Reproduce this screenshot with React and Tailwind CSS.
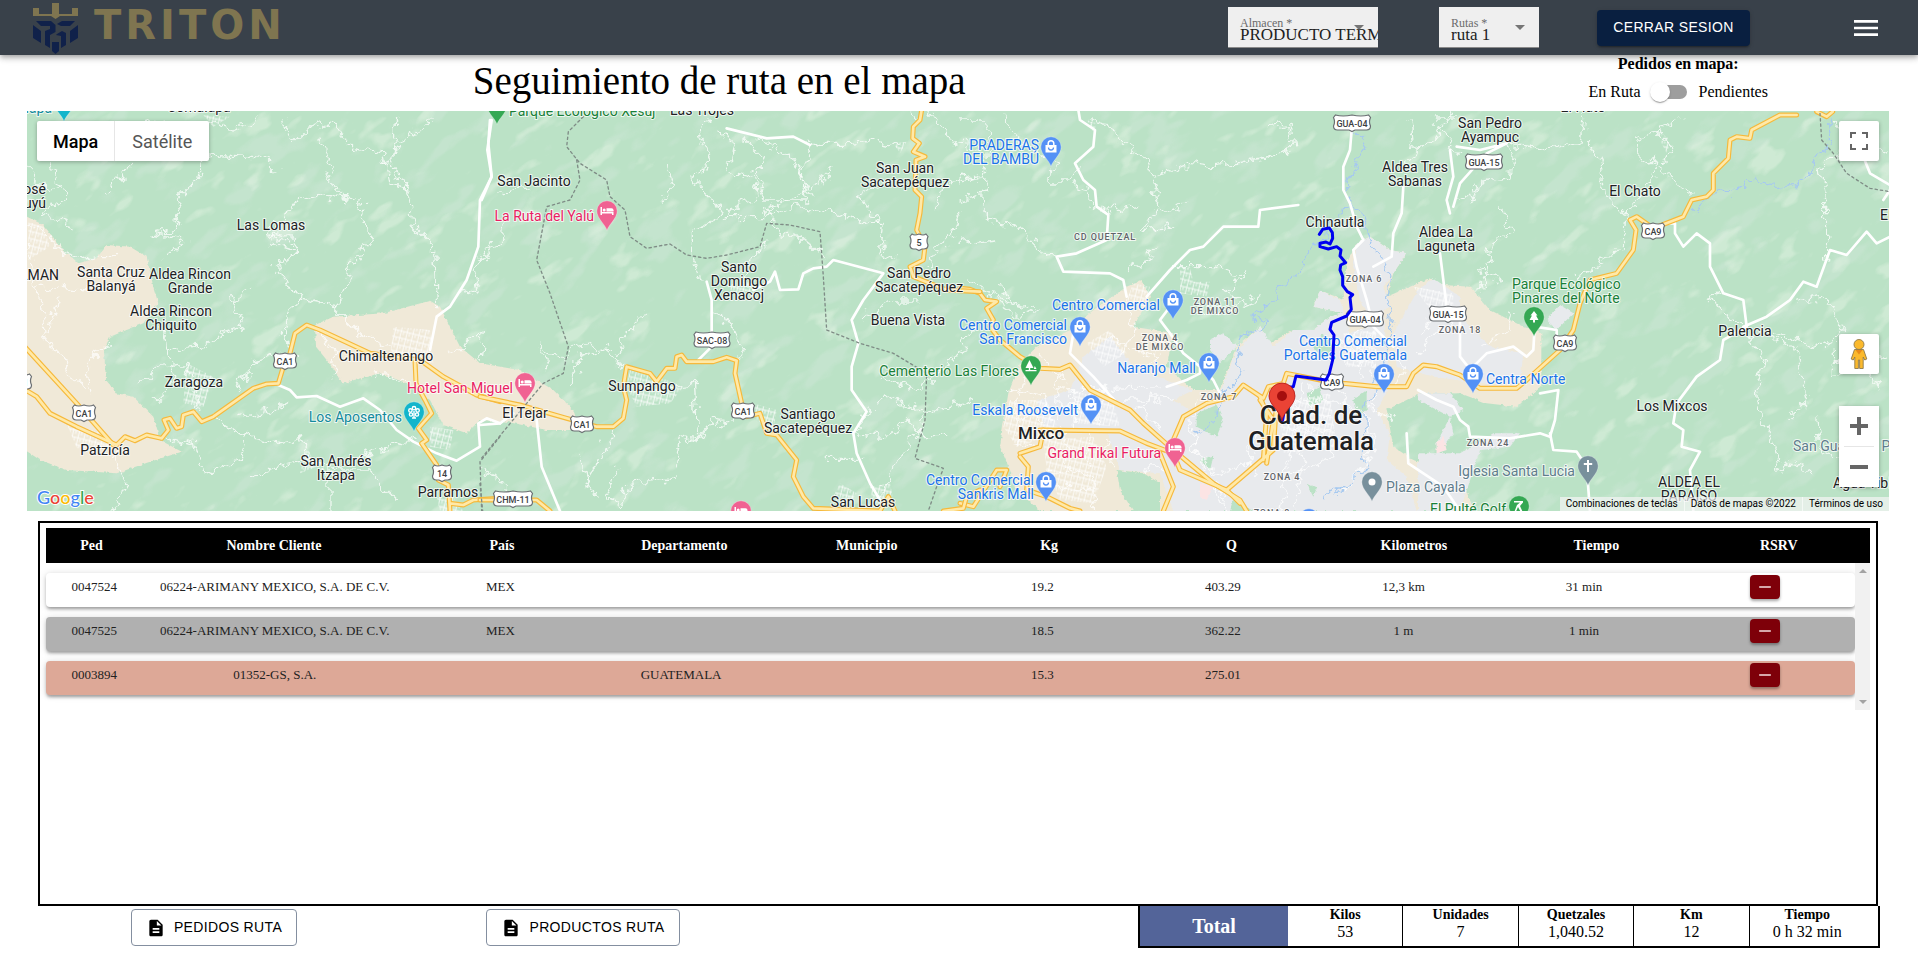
import React from "react";

const SERIF = "font-['Liberation_Serif',serif]";
const SANS = "font-['Liberation_Sans',Arial,sans-serif]";

/* ---------- Map data ---------- */

// Map sheets: every sheet is drawn at three units to the pixel.
const SHEETS = [
  {
    at: "translate(0 100) scale(0.33333)",
    beige: [
      "M60 340 L130 375 L190 450 L235 490 L290 475 L320 435 L390 440 L440 470 L460 560 L475 610 L430 670 L330 710 L312 750 L318 840 L350 880 L400 890 L460 950 L480 1020 L545 1055 L450 1085 L350 1120 L200 1110 L120 1080 L60 1040 Z",
      "M945 675 L1000 650 L1150 640 L1290 602 L1320 620 L1380 740 L1440 790 L1560 810 L1660 870 L1720 930 L1740 990 L1640 990 L1520 965 L1440 960 L1400 1000 L1330 975 L1290 900 L1220 850 L1140 820 L1030 850 L980 780 L948 740 Z",
    ],
    major: [
      "M60 725 L230 910 L340 1035",
      "M60 860 L110 890 L150 940 L230 980 L350 1035",
      "M350 1035 L375 1010 L405 1022 L440 1005 L485 1015 L505 990 L492 960 L510 955 L530 985 L545 980 L550 945 L580 935 L605 965 L640 950 L760 865 L800 852 L835 850 L850 800 L870 760 L885 700 L920 675 L960 690 L1110 760 L1260 780 L1330 830 L1430 885 L1500 905",
      "M1245 780 L1248 850 L1275 900 L1295 940 L1255 985 L1280 1020 L1265 1030 L1310 1095 L1315 1140 L1345 1155 L1350 1233 M1350 1210 L1390 1215 L1420 1200 L1500 1195",
    ],
    mid: [
      "M1470 60 L1465 130 L1475 230 L1440 300 L1435 440 L1400 540 L1350 620 L1310 650 L1290 750",
      "M835 855 L870 870 L890 892 L950 888 L1020 920 L1090 895 L1140 930 L1190 990 L1240 1025 L1310 1060 L1370 1082 L1440 1040 L1435 970 L1460 955 L1500 970",
    ],
    minor: [
      "M60 360 L130 390 L170 440 L240 480 L300 470 L360 470", "M85 430 L100 530 L120 600 L135 710 L200 800 L250 870",
      "M100 560 L250 570 L330 550", "M135 700 L180 600 M270 890 L260 800 L330 730", "M80 200 L140 270 L190 250 M150 190 L200 300 L130 340 L220 375",
      "M390 190 L370 230 L320 280 M500 60 L420 70 L380 130", "M620 90 L600 230 L530 300 L545 350 L500 400 L450 405 L560 420 L490 480",
      "M600 60 L700 90 L780 60 M620 165 L800 175 L830 215 M850 60 L880 130 L920 90 L1000 60",
      "M890 300 L850 350 L800 410 L880 430 L880 470 L830 490 L860 560 L910 590 L860 630 L850 700 L890 770",
      "M890 290 L960 280 L1040 300 L1090 290 L1080 360 L1120 410 L1050 500 L1030 590 L1000 620",
      "M960 120 L1000 200 L980 240 L1030 290 M1000 60 L1050 140 L1150 160 L1170 250 L1220 260 L1240 380 L1300 440 L1310 620",
      "M1190 60 L1180 200 L1220 270 M1300 60 L1200 120 L1160 200", "M900 600 L1000 620 L1080 700 L1170 740",
      "M740 570 L690 600 L730 680 L660 700 L620 740 L500 750 L490 660 M500 740 L530 850 L460 900", "M600 930 L580 850 L560 790 L470 800 L430 850",
      "M640 950 L740 1010 L820 1030 L910 1010 L925 1080 L1020 1110 L1100 1110 L1190 1200",
      "M610 1120 L590 1040 L490 1010 M610 1120 L720 1080 L740 1000", "M920 1080 L800 1110 L760 1130 M1020 1090 L1240 1020",
      "M340 1060 L380 1150 L330 1233 M990 1110 L990 1233", "M720 950 L820 930 L860 900 M840 760 L760 780 L720 860", "M1480 420 L1420 500 L1440 560 L1390 580",
      "M1360 750 L1450 700 L1440 770 M1130 820 L1220 850", "M820 400 L880 410 L870 450 L810 430 Z", "M950 690 L1010 770 L1000 830",
    ],
    dash: ["M1500 1010 L1440 1085 L1445 1233"],
    grids: ["M1180 680 L1290 690 L1300 790 L1170 780 Z", "M560 790 L640 830 L610 920 L550 910 Z", "M200 970 L310 1000 L330 1050 L230 1045 Z", "M1290 980 L1360 990 L1350 1050 L1290 1040 Z", "M920 1040 L950 1100 L900 1120 Z", "M1310 1190 L1350 1180 L1390 1233 L1320 1233 Z", "M85 365 L130 380 L150 440 L85 480 Z", "M610 45 L690 50 L640 80 Z"],
  },
  {
    at: "translate(480 100) scale(0.33333)",
    beige: [],
    major: [
      "M0 890 L120 915 L260 955 L350 980 L400 980 L430 955 L440 900 L430 860 L440 800 L510 820 L530 845 L560 805 L585 805 L590 770 L605 765 L620 785 L700 785 L740 772 L770 782 L765 820 L785 910 L800 950 L840 940 L860 1000 L890 1005 L950 1080 L940 1130 L970 1190 L1000 1225 L1200 1233",
      "M1325 30 L1320 60 L1300 80 L1298 115 L1318 130 L1300 155 L1335 170 L1308 180 L1305 270 L1325 290 L1320 340 L1310 390 L1335 440 L1330 480 L1290 500 L1300 530 L1400 570 L1500 575",
      "M0 1200 L170 1200 L210 1233", "M1200 1233 L1225 1190 L1245 1233 M1390 1233 L1450 1225 L1460 1190 L1500 1170",
    ],
    mid: [
      "M35 60 L22 150 L35 230 L5 300", "M680 545 L695 600 L695 740 L655 780", "M820 570 L870 545 L885 515 L900 570 L955 568 L970 520 L1000 505 L1040 500 L1060 480 L1210 520 L1150 600 L1115 660 L1135 730 L1115 800 L1115 870 L1160 935 L1120 1000 L1130 1060 L1170 1150 L1200 1200",
      "M170 960 L185 1100 L240 1233", "M740 85 L860 115 L940 110 L990 135", "M0 975 L60 970 L100 940",
    ],
    minor: [
      "M690 60 L650 100 L690 170 L680 200 L630 230 L690 290 L720 330 L690 370 L640 390 L640 460 L660 540",
      "M720 90 L760 130 L740 220 L820 230 L840 290 L780 310 L730 360", "M800 120 L850 170 L830 220 L860 300 L980 300 L960 200 L900 150 L840 120",
      "M990 130 L1080 130 L1180 120 L1260 140 M1000 130 L960 240 L1000 290", "M850 340 L920 300 L980 270 L1030 240 L1050 200",
      "M730 350 L850 350 L960 320 L1060 340 L1170 370 L1200 370", "M1200 370 L1170 330 L1130 280 L1200 260", "M1210 370 L1200 460 L1250 480",
      "M860 320 L900 400 L960 410 L1040 480", "M1350 30 L1420 130 L1500 140 M1360 330 L1400 250 L1500 230", "M1440 340 L1420 400 L1370 450 L1340 500",
      "M200 800 L180 740 L250 780 L290 740 L340 730 L400 780 L440 800 M410 770 L440 700 L490 640", "M280 850 L300 770 L380 740",
      "M400 990 L360 1080 L320 1130 L350 1200 M300 1060 L330 1170", "M410 1100 L380 1190 L430 1210 L440 1150 L580 1140",
      "M580 1120 L600 1010 L650 1020 L700 960 L750 970 L760 920 M560 860 L640 850 L650 1010", "M700 640 L760 680 L790 750 L770 780",
      "M1030 1075 L1150 1075 M1110 1000 L1220 1010 L1280 960 L1330 1010 L1400 1010", "M1200 900 L1250 890 L1330 940 L1480 900 M1180 920 L1120 1000",
      "M1210 840 L1310 870 L1420 780 L1490 680", "M0 1110 L50 1130 L90 1190 L170 1200", "M1200 1180 L1240 1110 L1330 960", "M0 480 L60 440 L80 350 M70 280 L150 260",
      "M1310 60 L1290 30 M1150 650 L1250 600 L1320 600", "M860 430 L800 490 L790 570", "M560 200 L580 260 L540 310",
    ],
    dash: [
      "M310 50 L265 95 L260 140 L300 190 L380 240 L390 290 L435 330 L450 410 L500 445 L570 432 L620 465 L680 475 L740 465 L840 440 L860 370 L930 375 L1020 395 L1030 530 L1040 690 L1140 730 L1240 760 L1340 820 L1335 960 L1305 1075 L1390 1105 L1370 1160 L1345 1233",
      "M290 180 L300 240 L270 300 L200 320 L170 480 L210 580 L265 740 L250 820 L190 850 L140 910 L0 1080", "M0 1150 L8 1233",
    ],
    grids: ["M450 810 L560 840 L610 860 L570 910 L470 920 L440 860 Z", "M820 910 L890 930 L880 990 L830 960 Z", "M1080 1150 L1130 1180 L1110 1210 L1060 1190 Z", "M1170 1160 L1230 1150 L1240 1200 L1180 1210 Z", "M740 555 L830 540 L830 570 L760 580 Z", "M1240 130 L1280 125 L1260 160 Z"],
  },
];

const CITY = {
  at: "translate(960 100) scale(0.33333)",
  beige: [
    "M545 540 L500 560 L400 630 L330 690 L230 740 L180 790 L145 880 L130 970 L120 1040 L150 1110 L170 1170 L240 1233 L1544 1233 L1500 1130 L1360 1080 L1300 1040 L1280 930 L1380 880 L1500 880 L1580 910 L1670 920 L1744 860 L1744 700 L1690 680 L1590 630 L1530 560 L1450 555 L1410 535 L1280 590 L1300 520 L1340 460 L1290 450 L1230 410 L1190 430 L1160 490 L1150 600 L1080 570 L1060 620 L1150 640 L1110 650 L1060 690 L1000 690 L930 730 L900 680 L830 740 L780 870 L700 870 L620 800 L640 700 L520 680 L570 590 Z",
  ],
  grey: [
    "M370 770 L450 710 L520 800 L640 850 L700 870 L640 900 L690 930 L780 880 L830 750 L900 680 L940 740 L1000 690 L1060 690 L1110 650 L1150 640 L1060 620 L1080 570 L1140 600 L1170 700 L1220 680 L1280 590 L1270 640 L1290 860 L1250 930 L1290 1000 L1280 1080 L1340 1130 L1370 1233 L640 1233 L600 1120 L480 1110 L440 990 L250 980 L230 900 L330 870 Z",
    "M1190 430 L1230 410 L1290 450 L1340 460 L1300 520 L1270 560 L1290 620 L1230 660 L1200 600 L1180 500 Z",
    "M1374 570 L1420 535 L1500 590 L1500 650 L1590 740 L1690 760 L1680 850 L1560 850 L1420 830 L1310 800 L1300 700 Z",
    "M1374 880 L1470 880 L1510 930 L1470 950 L1374 900 Z", "M1470 950 L1480 1000 L1430 1070 L1430 1030 Z",
    "M1374 1060 L1500 1060 L1600 1000 L1680 1000 L1650 1040 L1560 1050 L1500 1233 L1374 1233 Z",
    "M750 720 L790 700 L830 740 L780 790 L750 750 Z", "M1760 660 L1800 615 L1840 640 L1790 690 Z",
  ],
  green: [
    "M710 940 L770 915 L790 960 L770 1010 L710 980 Z", "M470 1110 L550 1120 L600 1150 L600 1233 L520 1233 L480 1170 Z", "M1040 880 L1080 860 L1090 900 L1050 920 Z",
    "M1180 900 L1220 870 L1220 930 L1190 950 Z", "M1040 1150 L1070 1165 L1060 1190 Z", "M720 1080 L760 1070 L750 1110 Z", "M820 1200 L880 1233 L810 1233 Z", "M1090 700 L1120 740 L1090 780 L1060 740 Z",
  ],
  pink: ["M720 1150 L760 1160 L740 1200 L720 1190 Z", "M1430 1030 L1450 1010 L1460 1050 L1430 1060 Z"],
  major: [
    "M0 565 L30 568 L60 580 L75 600 L110 605 L80 625 L100 660 L90 680 L120 720 L180 770 L240 805 L300 808 L330 795 L350 820 L390 870 L510 930 L550 970 L640 1050 L760 1150 L840 1200 L860 1233",
    "M240 990 L480 993 L560 1030 L640 1060 M600 1060 L640 1160 L610 1233 M640 1060 L660 1110 L800 1170 L840 1210 M640 1020 L670 950 L740 910 L820 890 L850 855 L910 895 L925 860 L970 850 L980 820 L1080 840 L1150 850 L1250 860 L1340 860 L1360 820 L1390 795 L1430 800 L1500 825 L1560 865 L1670 865 L1700 840 L1800 750 L1840 690 L1860 610 L1890 540 L1970 520 L2020 450 L2028 390 L2010 360 L2030 350 L2080 385 L2170 350 L2195 300 L2240 290 L2260 270 L2260 220 L2305 175 L2310 120 L2330 110 L2370 115 L2375 90 L2460 45 L2510 45 M2570 35 L2600 50 L2618 35",
    "M920 1090 L940 960 L900 900 M800 1170 L940 1050 L950 900 M910 1080 L920 940 L900 890 M180 1070 L205 1100 L200 1170 L260 1190 L330 1225 L360 1233 M180 1060 L240 1040 L250 990 M0 1210 L40 1220 L110 1110 L140 1110 L120 1160",
  ],
  mid: [
    "M355 30 L360 60 L405 90 L400 140 L345 190 L370 240 L405 270 L410 320 L445 345 L440 420 L350 460 L290 470 L310 515 L450 520 L490 540 L500 590",
    "M1175 90 L1170 150 L1150 200 L1150 270 L1170 310 L1190 380 L1210 420 L1180 450 L1190 500 L1220 600 L1240 680 L1300 740",
    "M1330 260 L1325 340 L1300 400 L1295 470 L1240 500", "M1470 150 L1480 230 L1460 300 L1470 340", "M560 590 L630 510 L690 450 L730 440 L790 380 L895 380 L900 330 L1015 315",
    "M1440 460 L1450 540 L1460 620 L1500 660 M1480 320 L1500 250 L1580 160 L1640 130 L1560 150 L1490 140",
    "M1500 650 L1500 770 L1540 820 M1540 800 L1580 760 L1660 740 L1700 770 L1720 750 L1724 680 L1790 690 L1790 720",
    "M1374 870 L1430 900 L1480 920 L1500 960 L1525 980 L1530 1010 L1650 1015 L1740 1000 L1770 1010 L1785 960 L1795 870 L1740 880",
    "M1770 1000 L1780 1050 L1850 1055 L1880 1100 L1890 1233", "M2110 370 L2145 370 L2145 400 L2170 440 L2210 400 L2250 430 L2250 500 L2290 580 L2350 600 L2360 680 L2290 720 L2280 780 L2210 830 L2150 910 L2140 970 L2170 990 L2165 1040 L2220 1055 L2190 1110 L2200 1233",
    "M2350 680 L2420 650 L2490 600 L2530 545 L2570 560 L2610 450 L2660 465 L2720 395 L2750 430 L2790 410", "M2710 170 L2730 220 L2790 255 M2790 270 L2770 300",
    "M1340 1000 L1345 1090 L1450 1160 L1500 1233", "M660 580 L600 660 L630 700 L670 760 L720 800 L760 840 L780 880", "M620 860 L680 840 L720 820 L720 790", "M480 920 L400 830 L330 760 L340 700",
  ],
  minor: [
    "M130 40 L170 120 L290 180 L260 240 L330 240 L360 200", "M0 240 L70 230 L90 120 L80 60 L0 60 M70 230 L80 350 L140 380 M140 370 L200 400 L250 460 L290 470",
    "M400 60 L470 100 L520 140 L560 190 L580 230 L690 190 L760 200 L900 180 L1000 150 L990 70 L930 80", "M580 240 L590 300 L620 340 L680 315 M590 320 L550 390 L640 380 M350 250 L410 330",
    "M0 300 L60 290 M0 430 L110 420 M430 330 L530 320 M500 520 L560 480 L590 440", "M1350 60 L1360 150 L1440 100 L1470 40 M1340 200 L1370 180 L1380 130 M1420 60 L1500 60",
    "M640 500 L760 500 L850 520 M860 510 L800 580 L850 600 M700 640 L770 640 L900 590", "M1480 290 L1530 300 L1560 250 L1650 240 L1660 160 L1640 130 M1500 160 L1450 100",
    "M1640 130 L1760 150 L1860 130 L1870 40 M1880 110 L1920 180 L1930 280 L1980 320 L2000 360", "M2160 60 L2030 120 L2040 190 L2090 180 L2080 240 L2000 330 L1990 420 L1940 480 L1850 530",
    "M2080 190 L2130 220 L2160 260 L2190 270 M2090 90 L2130 130 L2110 180", "M1550 500 L1620 540 M1560 570 L1600 430 L1660 400 L1620 320", "M2290 580 L2250 590 L2290 640 L2350 680",
    "M2350 700 L2420 780 L2390 850 L2400 960 L2430 1000 L2460 1110 M2420 700 L2500 740 L2540 900 L2480 960 M2450 700 L2580 740 L2650 700 L2600 590 L2520 600",
    "M2600 480 L2600 310 L2580 200 L2620 170 L2790 140 M2700 170 L2620 60", "M2740 770 L2790 780 M2620 740 L2620 820 L2720 810 L2760 870 M2560 1130 L2500 1090 L2460 1110 M2570 950 L2580 1050 L2640 1080",
    "M310 870 L600 860 M280 930 L420 900 L600 900 M240 760 L300 830 L290 960 M340 880 L340 980 M400 880 L410 960 M450 720 L560 760 L600 770 L560 800 M500 600 L520 700 L480 760",
    "M700 960 L720 900 M640 900 L580 890 L540 930 L600 990 M690 960 L700 1040 L770 1120 L870 1090 L880 1010 L910 1000 M880 1120 L860 1020",
    "M1020 850 L1010 1000 L1030 1090 L1010 1233 M1050 850 L1040 1010 M970 940 L1110 950 M960 980 L1120 990 M960 1020 L1130 1040 M1000 900 L1200 910 M1110 850 L1150 900 L1220 940 L1240 1040 L1200 1110 L1160 1160 M990 1060 L960 1233 M940 1130 L1040 1110 L1120 1060",
    "M1150 790 L1190 730 L1250 700 M1190 740 L1210 840 M1250 720 L1240 830 M1300 740 L1330 800 L1300 850 M1140 730 L1200 690 M1240 870 L1240 940 L1300 960",
    "M1374 760 L1420 700 L1500 650 M1380 700 L1420 640 M1660 640 L1640 700 L1560 740", "M150 870 L250 890 L280 960 M160 940 L240 960 M150 1030 L230 1040 M200 800 L170 900 L180 1040",
    "M300 990 L330 1100 L400 1130 L410 1233 M260 1120 L330 1110 M260 1160 L400 1170 M380 1000 L380 1110 M440 1020 L460 1100 M700 1040 L740 1110 L800 1233 M560 1100 L610 1110",
    "M20 540 L130 600 L210 620 L240 630 M110 600 L160 640 L230 635 M130 560 L160 620",
  ],
  water: [
    "M1180 90 L1215 130 L1195 190 L1160 240 L1170 300 L1210 340 L1230 440 L1270 480 L1290 520 L1280 600 L1300 660 L1280 720 L1280 790 L1240 860 L1220 940 L1210 1040 L1220 1110 L1150 1160 L1090 1190",
    "M1160 310 L1100 400 L1050 450 L1030 500 L960 560 L950 600 L880 650 L920 670 L850 710 L830 780 L840 830 L780 890 L760 970 L700 990",
    "M2200 330 L2250 290 L2350 260 L2380 240 L2480 265 L2550 230 L2570 160 L2620 130 L2610 50",
  ],
  dash: ["M2580 40 L2585 120 L2620 160 L2660 220 L2730 265 L2790 275"],
  grids: ["M520 550 L570 560 L550 620 L500 600 Z", "M660 510 L690 500 L700 545 L750 545 L740 590 L660 580 Z", "M150 900 L260 900 L300 1000 L170 1040 L130 980 Z", "M250 1020 L400 1010 L440 1100 L400 1210 L300 1200 L260 1110 Z", "M960 910 L1110 880 L1130 1040 L970 1060 Z", "M1360 560 L1480 580 L1480 640 L1420 640 Z", "M380 730 L450 690 L500 760 L430 800 Z", "M340 870 L460 910 L480 980 L340 970 Z", "M1150 700 L1250 690 L1240 800 L1160 800 Z", "M380 60 L410 70 L400 100 Z", "M400 310 L440 320 L430 345 Z", "M2100 120 L2130 130 L2120 160 Z"],
};

const INK = "#202124";
const BLUE = "#1a73e8";
const PINK = "#e91e63";
const GREEN = "#188038";
const TEAL = "#128a9c";
const SLATE = "#5f7d8c";

// Place names: lines, x, first baseline, anchor, colour.
const PLACES = [
  [["Jalapa"], 52, 113, "end", TEAL],
  [["Comalapa"], 199, 112, "middle", INK],
  [["San José", "Muyú"], 46, 194, "end", INK],
  [["ALMAN"], 59, 280, "end", INK],
  [["Las Lomas"], 271, 230, "middle", INK],
  [["Santa Cruz", "Balanyá"], 111, 277, "middle", INK],
  [["Aldea Rincon", "Grande"], 190, 279, "middle", INK],
  [["Aldea Rincon", "Chiquito"], 171, 316, "middle", INK],
  [["Chimaltenango"], 386, 361, "middle", INK],
  [["Zaragoza"], 194, 387, "middle", INK],
  [["Patzicía"], 105, 455, "middle", INK],
  [["San Andrés", "Itzapa"], 336, 466, "middle", INK],
  [["Parramos"], 448, 497, "middle", INK],
  [["Hotel San Miguel"], 513, 393, "end", PINK],
  [["Los Aposentos"], 402, 422, "end", TEAL],
  [["San Jacinto"], 534, 186, "middle", INK],
  [["La Ruta del Yalú"], 594, 221, "end", PINK],
  [["Parque Ecológico Xesuj"], 509, 116, "start", GREEN],
  [["Las Trojes"], 702, 115, "middle", INK],
  [["San Juan", "Sacatepéquez"], 905, 173, "middle", INK],
  [["Santo", "Domingo", "Xenacoj"], 739, 272, "middle", INK],
  [["San Pedro", "Sacatepéquez"], 919, 278, "middle", INK],
  [["Buena Vista"], 908, 325, "middle", INK],
  [["Sumpango"], 642, 391, "middle", INK],
  [["El Tejar"], 525, 418, "middle", INK],
  [["Santiago", "Sacatepéquez"], 808, 419, "middle", INK],
  [["San Lucas"], 863, 507, "middle", INK],
  [["Cementerio Las Flores"], 1019, 376, "end", GREEN],
  [["Centro Comercial", "Sankris Mall"], 1034, 485, "end", BLUE],
  [["Eskala Roosevelt"], 1078, 415, "end", BLUE],
  [["PRADERAS", "DEL BAMBÚ"], 1039, 150, "end", BLUE],
  [["Centro Comercial"], 1160, 310, "end", BLUE],
  [["Centro Comercial", "San Francisco"], 1067, 330, "end", BLUE],
  [["Naranjo Mall"], 1196, 373, "end", BLUE],
  [["Grand Tikal Futura"], 1161, 458, "end", PINK],
  [["Chinautla"], 1335, 227, "middle", INK],
  [["Centro Comercial", "Portales Guatemala"], 1407, 346, "end", BLUE],
  [["Aldea Tres", "Sabanas"], 1415, 172, "middle", INK],
  [["Plaza Cayala"], 1386, 492, "start", SLATE],
  [["San Pedro", "Ayampuc"], 1490, 128, "middle", INK],
  [["El Hato"], 1583, 112, "middle", INK],
  [["El Chato"], 1635, 196, "middle", INK],
  [["Aldea La", "Laguneta"], 1446, 237, "middle", INK],
  [["Parque Ecológico", "Pinares del Norte"], 1512, 289, "start", GREEN],
  [["Palencia"], 1745, 336, "middle", INK],
  [["Los Mixcos"], 1672, 411, "middle", INK],
  [["Centra Norte"], 1486, 384, "start", BLUE],
  [["Iglesia Santa Lucia"], 1575, 476, "end", SLATE],
  [["ALDEA EL", "PARAÍSO"], 1689, 487, "middle", INK],
  [["El Pulté Golf"], 1506, 514, "end", GREEN],
  [["San Guayabal P"], 1793, 451, "start", SLATE],
  [["Agua Tibia"], 1833, 488, "start", INK],
  [["El Fiscal"], 1880, 220, "start", INK],
];

const ZONES = [
  [["CD QUETZAL"], 1105, 240],
  [["ZONA 11", "DE MIXCO"], 1215, 305],
  [["ZONA 4", "DE MIXCO"], 1160, 341],
  [["ZONA 7"], 1219, 400],
  [["ZONA 6"], 1364, 282],
  [["ZONA 4"], 1282, 480],
  [["ZONA 18"], 1460, 333],
  [["ZONA 24"], 1488, 446],
  [["ZONA 8"], 1272, 516],
];

const SHIELDS = [
  ["CA1", 285, 361, 23], ["CA1", 84, 413, 23], ["14", 442, 473, 19], ["CA1", 20, 382, 23], ["5", 919, 242, 18],
  ["SAC-08", 712, 340, 36], ["CA1", 743, 411, 23], ["CA1", 582, 424, 23], ["CHM-11", 513, 499, 39], ["GUA-04", 1352, 123, 37],
  ["GUA-04", 1365, 319, 37], ["CA9", 1332, 382, 23], ["GUA-15", 1484, 162, 37], ["GUA-15", 1448, 314, 37], ["CA9", 1653, 231, 23], ["CA9", 1565, 343, 23],
];

const PINS = [
  ["garden", 64, 102], ["garden", 414, 412], ["tree", 497, 105], ["bed", 607, 211], ["bed", 525, 383], ["bed", 741, 511],
  ["bag", 1051, 147], ["bag", 1173, 300], ["bag", 1080, 327], ["grove", 1031, 366], ["bag", 1209, 363], ["bag", 1091, 405],
  ["bed", 1175, 448], ["bag", 1046, 482], ["bag", 1384, 374], ["dot", 1372, 482], ["bag", 1309, 519], ["tree", 1534, 317],
  ["bag", 1473, 374], ["cross", 1588, 466], ["golf", 1519, 506],
];

const PIN_FILL = { garden: "#12b5cb", tree: "#34a853", grove: "#34a853", golf: "#34a853", bed: "#f06292", bag: "#5491f5", dot: "#78909c", cross: "#78909c" };

function PinGlyph({ kind }) {
  if (kind === "bag")
    return (
      <g>
        <path d="M-5.500 -2 H5.500 V5.500 H-5.500 Z" fill="#fff" />
        <path d="M-2.800 -2 V-3.500 A2.800 2.800 0 0 1 2.800 -3.500 V-2" fill="none" stroke="#fff" strokeWidth="1.500" />
        <path d="M-2.500 0.500 A2.500 2.500 0 0 0 2.500 0.500" fill="none" stroke="#5491f5" strokeWidth="1.300" />
      </g>
    );
  if (kind === "bed")
    return (
      <g fill="#fff">
        <path d="M-6.500 -4 H-5 V1 H6.500 V4 H5 V2.500 H-5 V4 H-6.500 Z" />
        <path d="M-0.500 -2.800 H4.500 A2 2 0 0 1 6.500 -0.800 V0.500 H-0.500 Z" />
        <circle cx="-2.800" cy="-1" r="1.500" />
      </g>
    );
  if (kind === "tree") return <path d="M0 -6 L3.500 -1.500 H2 L4.500 3 H1 V5.500 H-1 V3 H-4.500 L-2 -1.500 H-3.500 Z" fill="#fff" />;
  if (kind === "grove")
    return (
      <g fill="#fff">
        <path d="M-1.500 -6 L2.500 2 H-0.800 V4 H5.500 V5.300 H-5.500 V4 H-2.200 V2 H-5.500 Z" />
        <path d="M3.800 0 L5.500 3 H2.800 Z" />
      </g>
    );
  if (kind === "cross") return <path d="M-1 -6 H1 V-3 H4.200 V-1 H1 V6 H-1 V-1 H-4.200 V-3 H-1 Z" fill="#fff" />;
  if (kind === "golf") return <path d="M-5 -5 H4 V-3.500 L1 0 L3.500 5.500 H1.500 L-1 1 L-3 5.500 H-4.500 L-2 -1 L1 -3.500 H-5 Z" fill="#fff" />;
  if (kind === "garden")
    return (
      <g fill="none" stroke="#fff" strokeWidth="1.400">
        <circle cx="0" cy="-3.800" r="1.700" /><circle cx="-3.600" cy="-1.500" r="1.700" /><circle cx="3.600" cy="-1.500" r="1.700" />
        <circle cx="-3" cy="2.500" r="1.600" /><circle cx="3" cy="2.500" r="1.600" /><path d="M0 -1 V6 M-2 6 H2" />
      </g>
    );
  return <circle r="3.500" fill="#fff" />;
}

function Pin({ kind, x, y }) {
  return (
    <g transform={`translate(${x} ${y})`}>
      <path d="M0 19.500 C-1.200 14 -10.200 7.500 -10.200 0 A10.200 10.200 0 0 1 10.200 0 C10.200 7.500 1.200 14 0 19.500 Z" fill={PIN_FILL[kind]} stroke="#fff" strokeOpacity="0.5" strokeWidth="0.6" />
      <PinGlyph kind={kind} />
    </g>
  );
}

function Shield({ text, x, y, w }) {
  const a = w / 2;
  return (
    <g transform={`translate(${x} ${y})`}>
      <path
        d={`M${-a + 2} -8 Q${-a / 2} -6 0 -8 Q${a / 2} -6 ${a - 2} -8 L${a} -5.5 Q${a - 2} -1 ${a} 3 Q${a} 7 ${a - 4} 7 H3 L0 8.500 L-3 7 H${-a + 4} Q${-a} 7 ${-a} 3 Q${-a + 2} -1 ${-a} -5.5 Z`}
        fill="#fff" stroke="#6b6f73" strokeWidth="1.200"
      />
      <text y="4" textAnchor="middle" className="fill-[#3c4043] font-['Roboto',sans-serif] text-[9px] font-medium">{text}</text>
    </g>
  );
}

function Sheet({ data }) {
  const area = (list, fill) => (list || []).map((d) => <path key={d} d={d} fill={fill} />);
  const line = (list, stroke, width, extra) =>
    (list || []).map((d) => <path key={d} d={d} fill="none" stroke={stroke} strokeWidth={width} strokeLinejoin="round" strokeLinecap="round" {...extra} />);
  return (
    <g transform={data.at}>
      <g filter="url(#rough)">
        {area(data.beige, "#f0e9d8")}
        {area(data.grey, "#e8eaed")}
        {area(data.green, "#bbe2c6")}
        {area(data.pink, "#fce4e4")}
      </g>
      {area(data.grids, "url(#streets)")}
      <g filter="url(#wiggle)">
        {line(data.water, "#a6c9f0", 4)}
        {line(data.minor, "#fff", 4, { strokeOpacity: 0.75 })}
      </g>
      {line(data.mid, "#fff", 8)}
      {line(data.major, "#f6b93b", 15)}
      {line(data.major, "#ffe9a8", 8)}
      {line(data.dash, "#7f8c86", 4, { strokeDasharray: "7 9" })}
    </g>
  );
}

function MapDrawing() {
  const halo = { paintOrder: "stroke" };
  return (
    <svg viewBox="27 111 1862 400" preserveAspectRatio="xMidYMid slice" className="block h-full w-full" role="img" aria-label="Mapa de la ruta">
      <defs>
        <filter id="rough" x="-5%" y="-5%" width="110%" height="110%">
          <feTurbulence type="fractalNoise" baseFrequency="0.09" numOctaves="2" seed="4" result="n" />
          <feDisplacementMap in="SourceGraphic" in2="n" scale="11" xChannelSelector="R" yChannelSelector="G" />
        </filter>
        <filter id="wiggle" x="-5%" y="-5%" width="110%" height="110%">
          <feTurbulence type="fractalNoise" baseFrequency="0.03" numOctaves="3" seed="9" result="n" />
          <feDisplacementMap in="SourceGraphic" in2="n" scale="55" xChannelSelector="R" yChannelSelector="G" />
        </filter>
        <filter id="reliefDark" x="0" y="0" width="100%" height="100%">
          <feTurbulence type="fractalNoise" baseFrequency="0.02 0.042" numOctaves="3" seed="11" />
          <feColorMatrix values="0 0 0 0 0.63  0 0 0 0 0.8  0 0 0 0 0.69  7 0 0 0 -4" />
        </filter>
        <filter id="reliefLight" x="0" y="0" width="100%" height="100%">
          <feTurbulence type="fractalNoise" baseFrequency="0.024 0.05" numOctaves="3" seed="37" />
          <feColorMatrix values="0 0 0 0 0.84  0 0 0 0 0.93  0 0 0 0 0.82  7 0 0 0 -4.4" />
        </filter>
        <pattern id="streets" width="18" height="21" patternUnits="userSpaceOnUse" patternTransform="rotate(14)">
          <path d="M0 3 H18 M4 0 V21 M12 3 V14" stroke="#fff" strokeWidth="3" strokeOpacity="0.8" fill="none" />
        </pattern>
      </defs>
      <rect x="0" y="0" width="1918" height="600" fill="#bbe2c6" />
      <g transform="rotate(-38 958 311)">
        <rect x="-200" y="-700" width="2400" height="2000" filter="url(#reliefDark)" opacity="0.45" />
        <rect x="-200" y="-700" width="2400" height="2000" filter="url(#reliefLight)" opacity="0.4" />
      </g>
      <Sheet data={CITY} />
      {SHEETS.map((s) => <Sheet key={s.at} data={s} />)}
      {SHIELDS.map(([t, x, y, w]) => <Shield key={`${t}${x}`} text={t} x={x} y={y} w={w} />)}
      {PLACES.map(([lines, x, y, anchor, fill]) => (
        <text key={lines[0] + x} textAnchor={anchor} fill={fill} stroke="#fff" strokeWidth="2" strokeOpacity="0.75" strokeLinejoin="round" style={halo} className="font-['Roboto',sans-serif] text-[14px]">
          {lines.map((l, i) => <tspan key={l} x={x} y={y + i * 14}>{l}</tspan>)}
        </text>
      ))}
      {ZONES.map(([lines, x, y]) => (
        <text key={lines[0] + x} textAnchor="middle" fill="#5f6368" stroke="#fff" strokeWidth="2" strokeOpacity="0.75" style={halo} className="font-['Roboto',sans-serif] text-[9px] font-medium tracking-widest">
          {lines.map((l, i) => <tspan key={l} x={x} y={y + i * 9}>{l}</tspan>)}
        </text>
      ))}
      <g stroke="#fff" strokeWidth="2" strokeOpacity="0.8" fill={INK} textAnchor="middle" style={halo}>
        <text x="1041" y="439" className="font-['Roboto',sans-serif] text-[17px] font-medium">Mixco</text>
        <text className="font-['Roboto',sans-serif] text-[26px] font-medium">
          <tspan x="1311" y="424">Cdad. de</tspan>
          <tspan x="1311" y="450">Guatemala</tspan>
        </text>
      </g>
      {PINS.map(([k, x, y]) => <Pin key={k + x} kind={k} x={x} y={y} />)}
      <path
        transform="translate(960 100) scale(0.33333)"
        d="M1078 403 L1088 388 L1108 384 L1117 398 L1118 415 L1110 432 L1098 426 L1080 430 L1080 440 L1105 447 L1130 440 L1143 450 L1140 468 L1157 488 L1142 495 L1140 510 L1148 530 L1148 556 L1162 575 L1178 584 L1170 592 L1174 628 L1160 648 L1115 667 L1110 688 L1122 705 L1118 780 L1108 820 L1098 840 L1008 828 L1000 860 L985 862 L968 960"
        fill="none" stroke="#0000f0" strokeWidth="9" strokeLinejoin="round" strokeLinecap="round"
      />
      <path d="M1282 421 C1280.500 411 1269 405 1269 396 A13 13 0 0 1 1295 396 C1295 405 1283.500 411 1282 421 Z" fill="#ea4335" stroke="#b31412" strokeWidth="0.8" />
      <circle cx="1282" cy="396" r="5" fill="#a50e0e" />
      <text x="37" y="504" stroke="#fff" strokeWidth="2" style={halo} className="font-['Lato',sans-serif] text-[18px] font-medium">
        <tspan fill="#4285f4">G</tspan><tspan fill="#ea4335">o</tspan><tspan fill="#fbbc04">o</tspan><tspan fill="#4285f4">g</tspan><tspan fill="#34a853">l</tspan><tspan fill="#ea4335">e</tspan>
      </text>
    </svg>
  );
}

function MapControls() {
  const box = "flex w-[40px] items-center justify-center bg-white";
  return (
    <>
      <div className="absolute left-[10px] top-[10px] flex h-[40px] rounded-[2px] bg-white font-['Roboto',sans-serif] text-[18px] shadow-[0_1px_4px_rgba(0,0,0,0.3)]">
        <button type="button" className="border-r border-[#e6e6e6] px-[16px] font-medium text-black">Mapa</button>
        <button type="button" className="px-[17px] text-[#565656]">Satélite</button>
      </div>
      <button type="button" aria-label="Pantalla completa" className={`${box} absolute right-[10px] top-[10px] h-[40px] rounded-[2px] shadow-[0_1px_4px_rgba(0,0,0,0.3)]`}>
        <svg viewBox="0 0 18 18" className="size-[18px] fill-[#666]"><path d="M0 0v6h2V2h4V0H0zm16 0h-4v2h4v4h2V0h-2zm0 16h-4v2h6v-6h-2v4zM2 12H0v6h6v-2H2v-4z" /></svg>
      </button>
      <div className="absolute bottom-[24px] right-[10px] flex flex-col gap-[32px]">
        <button type="button" aria-label="Street View" className={`${box} h-[40px] rounded-[2px] shadow-[0_1px_4px_rgba(0,0,0,0.3)]`}>
          <svg viewBox="0 0 18 32" className="h-[32px] w-[18px]">
            <path d="M4.500 11.500 H13.500 L16.800 21 L14.800 22 L13.200 19 V30.500 H9.600 V22 H8.400 V30.500 H4.800 V19 L3.200 22 L1.200 21 Z" fill="#fbb92c" stroke="#8f7a4b" strokeWidth="0.9" strokeLinejoin="round" />
            <path d="M5.500 12 H12.500 L9 16.500 Z" fill="#e88a1a" />
            <circle cx="9" cy="6.500" r="5" fill="#fbb92c" stroke="#8f7a4b" strokeWidth="0.9" />
          </svg>
        </button>
        <div className="flex flex-col items-center rounded-[2px] bg-white shadow-[0_1px_4px_rgba(0,0,0,0.3)]">
          <button type="button" aria-label="Acercar" className={`${box} h-[40px]`}>
            <svg viewBox="0 0 18 18" className="size-[18px] fill-[#666]"><path d="M0 7h7V0h4v7h7v4h-7v7H7v-7H0z" /></svg>
          </button>
          <span className="h-px w-[30px] bg-[#e6e6e6]" />
          <button type="button" aria-label="Alejar" className={`${box} h-[40px]`}>
            <svg viewBox="0 0 18 18" className="size-[18px] fill-[#666]"><path d="M0 7h18v4H0z" /></svg>
          </button>
        </div>
      </div>
      <div className="absolute bottom-0 right-0 flex h-[14px] items-center divide-x divide-white/60 bg-[#f5f5f5]/70 font-['Roboto',sans-serif] text-[10px] leading-[14px] text-black">
        <button type="button" className="px-[6px]">Combinaciones de teclas</button>
        <span className="px-[6px]">Datos de mapas ©2022</span>
        <a href="#terminos" className="px-[6px]">Términos de uso</a>
      </div>
    </>
  );
}

/* ---------- Page chrome ---------- */

function Brand() {
  return (
    <a href="#inicio" aria-label="Triton" className="flex items-center gap-4">
      <svg viewBox="0 0 45 52" className="h-[52px] w-[45px]">
        <path fill="#7f7550" d="M0 6 H6 V12 H19 V1 H26 V12 H39 V6 H45 V14 H27 L22.500 17 L18 14 H0 Z" />
        <g fill="#10214a">
          <path d="M3 19 H18 L22.500 23 V30 L17 33 V46 L12 43 V29 L17 27 V24 H8 Z" />
          <path d="M42 19 H29 L24 22 L28 24 H37 Z" />
          <path d="M24 32 L29 29 L33 31 V43 L28 46 V34 L23 33 Z" />
          <path d="M0 23 L8 29 V41 L0 36 Z M45 23 L37 29 V41 L45 36 Z" />
          <path d="M19 40 H26 V49 L22.500 52 L19 49 Z" />
        </g>
      </svg>
      <span className="pb-[5px] font-['DejaVu_Sans',sans-serif] text-[40px] font-bold leading-none tracking-widest text-[#7f7550]">TRITON</span>
    </a>
  );
}

function FilledSelect({ id, label, width, options }) {
  return (
    <div className={`relative h-[41px] overflow-hidden border-b border-[#8a8a8a] bg-[#efefef] ${width} ${SERIF}`}>
      <label htmlFor={id} className="absolute left-[12px] top-[9px] text-[12px] leading-[14px] text-[#6b6b6b]">{label}</label>
      <select id={id} className="h-full w-full appearance-none bg-transparent pl-[12px] pt-[15px] text-[17px] leading-[20px] text-[#212121] outline-none">
        {options.map((o) => <option key={o}>{o}</option>)}
      </select>
      <svg viewBox="0 0 24 24" className="pointer-events-none absolute right-[7px] top-[8px] size-6 fill-[#757575]"><path d="M7 10l5 5 5-5z" /></svg>
    </div>
  );
}

function TopBar() {
  return (
    <header className="relative z-10 flex h-[55px] items-center justify-between bg-[#39414a] pl-[33px] pr-[36px] shadow-[0_2px_4px_-1px_rgba(0,0,0,0.2),0_4px_5px_0_rgba(0,0,0,0.14),0_1px_10px_0_rgba(0,0,0,0.12)]">
      <Brand />
      <div className="flex items-center">
        <FilledSelect id="almacen" label="Almacen *" width="w-[150px]" options={["PRODUCTO TERMINADO"]} />
        <div className="ml-[61px]">
          <FilledSelect id="rutas" label="Rutas *" width="w-[100px]" options={["ruta 1"]} />
        </div>
        <button type="button" className={`ml-[58px] h-[36px] w-[153px] whitespace-nowrap rounded bg-[#091f40] text-[14px] tracking-wide text-white shadow-[0_3px_1px_-2px_rgba(0,0,0,0.2),0_2px_2px_0_rgba(0,0,0,0.14),0_1px_5px_0_rgba(0,0,0,0.12)] ${SANS}`}>
          CERRAR SESION
        </button>
        <button type="button" aria-label="Menú" className="ml-[100px]">
          <svg viewBox="0 0 24 24" className="size-8 fill-white"><path d="M3 18h18v-2H3v2zm0-5h18v-2H3v2zm0-7v2h18V6H3z" /></svg>
        </button>
      </div>
    </header>
  );
}

function TitleRow() {
  return (
    <div className="grid h-[56px] grid-cols-[3fr_1fr]">
      <h1 className="text-center text-[39px] leading-[52px]">Seguimiento de ruta en el mapa</h1>
      <div className="flex flex-col items-center">
        <h2 className="text-[16px] font-bold leading-[18px]">Pedidos en mapa:</h2>
        <div className="flex h-[38px] items-center text-[16px]">
          <span>En Ruta</span>
          <label className="relative mx-[10px] flex h-[20px] w-[38px] items-center">
            <input type="checkbox" role="switch" aria-label="Pedidos pendientes" className="peer absolute inset-0 size-full cursor-pointer opacity-0" />
            <span className="pointer-events-none ml-[2px] h-[14px] w-[34px] rounded-full bg-[#9e9e9e]" />
            <span className="pointer-events-none absolute left-[-1px] size-[20px] rounded-full bg-white shadow-[0_2px_1px_-1px_rgba(0,0,0,0.2),0_1px_1px_0_rgba(0,0,0,0.14),0_1px_3px_0_rgba(0,0,0,0.12)] peer-checked:left-[18px]" />
          </label>
          <span>Pendientes</span>
        </div>
      </div>
    </div>
  );
}

/* ---------- Orders ---------- */

const COLS = ["w-[5%]", "w-[15%]", "w-[10%]", "w-[10%]", "w-[10%]", "w-[10%]", "w-[10%]", "w-[10%]", "w-[10%]", "w-[10%]"];
const HEADS = ["Ped", "Nombre Cliente", "País", "Departamento", "Municipio", "Kg", "Q", "Kilometros", "Tiempo", "RSRV"];
const ORDERS = [
  { tone: "bg-white", cells: ["0047524", "06224-ARIMANY MEXICO, S.A. DE C.V.", "MEX", "", "", "19.2", "403.29", "12,3 km", "31 min"] },
  { tone: "bg-[#b0b0b0]", cells: ["0047525", "06224-ARIMANY MEXICO, S.A. DE C.V.", "MEX", "", "", "18.5", "362.22", "1 m", "1 min"] },
  { tone: "bg-[#dda897]", cells: ["0003894", "01352-GS, S.A.", "", "GUATEMALA", "", "15.3", "275.01", "", ""] },
];

function OrdersTable() {
  return (
    <section className="ml-[38px] mr-[40px] mt-[10px] h-[385px] border-2 border-black px-[6px] py-[5px]">
      <div className="relative">
        <table className="block">
          <thead className="block bg-black text-white">
            <tr className="flex h-[35px] items-center text-[14px]">
              {HEADS.map((h, i) => <th key={h} scope="col" className={`${COLS[i]} whitespace-nowrap text-center font-bold`}>{h}</th>)}
            </tr>
          </thead>
          <tbody className="flex h-[147px] flex-col gap-[10px] pr-[15px] pt-[10px]">
            {ORDERS.map((o) => (
              <tr key={o.cells[0]} className={`flex h-[34px] shrink-0 items-start rounded pl-[3px] pt-[2px] text-[13px] leading-[24px] text-[#212121] shadow-[0_3px_3px_-1px_rgba(0,0,0,0.25),0_2px_4px_0_rgba(0,0,0,0.14),0_0_8px_0_rgba(0,0,0,0.1)] ${o.tone}`}>
                {o.cells.map((c, i) => <td key={i} className={`${COLS[i]} h-[24px] whitespace-nowrap text-center`}>{c}</td>)}
                <td className="flex w-[10%] justify-center">
                  <button type="button" aria-label={`Quitar pedido ${o.cells[0]}`} className="flex h-[24px] w-[30px] items-center justify-center rounded bg-[#7e0009] shadow-[0_2px_3px_rgba(0,0,0,0.35)]">
                    <svg viewBox="0 0 24 24" className="size-[20px] fill-[#e8c9cb]"><path d="M19 13H5v-2h14v2z" /></svg>
                  </button>
                </td>
              </tr>
            ))}
          </tbody>
        </table>
        <div aria-hidden="true" className="absolute bottom-0 right-0 flex h-[147px] w-[15px] flex-col items-center justify-between bg-[#f1f1f1] py-[6px]">
          <svg viewBox="0 0 8 4" className="h-[4px] w-[8px] fill-[#a3a3a3]"><path d="M0 4 L4 0 L8 4 Z" /></svg>
          <svg viewBox="0 0 8 4" className="h-[4px] w-[8px] fill-[#a3a3a3]"><path d="M0 0 L4 4 L8 0 Z" /></svg>
        </div>
      </div>
    </section>
  );
}

function ReportButton({ children }) {
  return (
    <button type="button" className={`flex h-[37px] items-center gap-[8px] whitespace-nowrap rounded border border-[#848fa0] px-[14px] text-[14px] tracking-wide text-black ${SANS}`}>
      <svg viewBox="0 0 24 24" className="size-[20px] fill-black"><path d="M14 2H6c-1.100 0-1.990.9-1.990 2L4 20c0 1.100.89 2 1.990 2H18c1.100 0 2-.9 2-2V8l-6-6zm2 16H8v-2h8v2zm0-4H8v-2h8v2zm-3-5V3.500L18.500 9H13z" /></svg>
      {children}
    </button>
  );
}

const TOTALS = [["Kilos", "53"], ["Unidades", "7"], ["Quetzales", "1,040.52"], ["Km", "12"], ["Tiempo", "0 h 32 min"]];

function Footer() {
  return (
    <footer className="flex items-start justify-between pr-[38px]">
      <div className="flex w-[740px] pt-[3px]">
        <div className="flex w-[428px] justify-center"><ReportButton>PEDIDOS RUTA</ReportButton></div>
        <div className="flex w-[310px] justify-center"><ReportButton>PRODUCTOS RUTA</ReportButton></div>
      </div>
      <div className="flex h-[42px] w-[742px] border-x-2 border-b-2 border-black pr-[13px]">
        <h3 className="flex w-[148px] items-center justify-center bg-[#536499] text-[20px] font-bold text-white">Total</h3>
        <dl className="grid flex-1 grid-cols-5 divide-x divide-black text-center">
          {TOTALS.map(([k, v]) => (
            <div key={k}>
              <dt className="text-[14px] font-bold leading-[17px]">{k}</dt>
              <dd className="text-[16px] leading-[18px]">{v}</dd>
            </div>
          ))}
        </dl>
      </div>
    </footer>
  );
}

export default function App() {
  return (
    <div className={`min-h-screen bg-white text-black ${SERIF}`}>
      <TopBar />
      <main>
        <TitleRow />
        <section aria-label="Mapa" className="relative ml-[27px] mr-[29px] h-[400px] overflow-hidden">
          <MapDrawing />
          <MapControls />
        </section>
        <OrdersTable />
        <Footer />
      </main>
    </div>
  );
}
